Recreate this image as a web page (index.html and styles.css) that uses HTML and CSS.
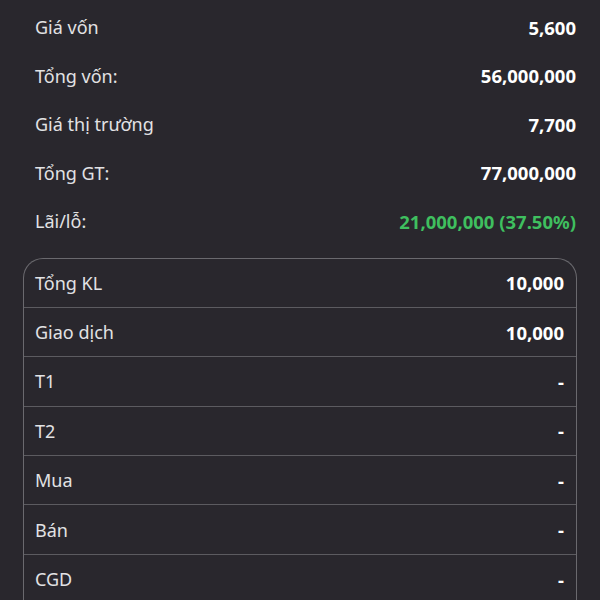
FILE: index.html
```html
<!DOCTYPE html>
<html lang="vi">
<head>
    <meta charset="UTF-8">
    <meta name="viewport" content="width=device-width, initial-scale=1.0">
    <title>Chi tiết danh mục</title>
    <link rel="stylesheet" href="styles.css">
</head>
<body>
    <!-- Tóm tắt vị thế -->
    <div class="summary">
        <div class="summary-row"><span class="label">Giá vốn</span><span class="value">5,600</span></div>
        <div class="summary-row"><span class="label">Tổng vốn:</span><span class="value">56,000,000</span></div>
        <div class="summary-row"><span class="label">Giá thị trường</span><span class="value">7,700</span></div>
        <div class="summary-row"><span class="label">Tổng GT:</span><span class="value">77,000,000</span></div>
        <div class="summary-row"><span class="label">Lãi/lỗ:</span><span class="value up">21,000,000 (37.50%)</span></div>
    </div>

    <!-- Khối lượng -->
    <div class="card">
        <div class="card-row"><span class="label">Tổng KL</span><span class="value">10,000</span></div>
        <div class="card-row"><span class="label">Giao dịch</span><span class="value">10,000</span></div>
        <div class="card-row"><span class="label">T1</span><span class="value">-</span></div>
        <div class="card-row"><span class="label">T2</span><span class="value">-</span></div>
        <div class="card-row"><span class="label">Mua</span><span class="value">-</span></div>
        <div class="card-row"><span class="label">Bán</span><span class="value">-</span></div>
        <div class="card-row"><span class="label">CGD</span><span class="value">-</span></div>
    </div>
</body>
</html>
```

FILE: styles.css
```css
body {
    margin: 0;
    background-color: #29272d;
    font-family: "Noto Sans", "Open Sans", sans-serif;
    font-size: 18px;
    color: #e2e2e4;
    overflow: hidden;
}
.summary {
    display: flex;
    flex-direction: column;
    padding: 3px 24px 0 35px;
}
.summary-row, .card-row {
    display: flex;
    justify-content: space-between;
    align-items: center;
}
.summary-row {
    height: 48.5px;
}
.value {
    font-size: 18.5px;
    font-weight: bold;
    color: #ffffff;
}
.value.up {
    color: #3fbf5f;
}
.card {
    margin: 12px 23px 0 23px;
    border: 1px solid #6a696e;
    border-bottom: none;
    border-radius: 20px 20px 0 0;
}
.card-row {
    height: 48.4px;
    padding: 0 12px 0 11px;
    border-bottom: 1px solid #5c5b60;
}
```
